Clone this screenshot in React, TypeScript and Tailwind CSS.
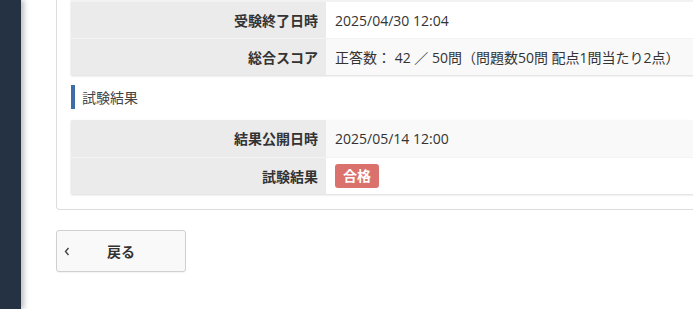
export default function App() {
  const font = { fontFamily: '"Open Sans", "Noto Sans CJK JP", sans-serif' };
  return (
    <div className="flex h-[309px] w-[693px] overflow-hidden bg-white text-[14px] text-[#333]" style={font}>
      {/* Sidebar */}
      <div className="relative z-10 w-[21px] shrink-0 bg-[#253243] shadow-[3px_0_5px_rgba(0,0,0,0.25)]" />

      {/* Main */}
      <div className="flex-1 pl-[35px]">
        {/* Panel */}
        <div className="w-[680px] rounded-b-[4px] border border-t-0 border-[#dddddd] px-[14px] pb-[15px]">
          {/* Exam summary table */}
          <div className="border-t-2 border-[#f2f2f2] shadow-[0_1px_2px_rgba(0,0,0,0.15)]">
            <div className="flex h-[36px]">
              <div className="flex w-[255px] items-center justify-end bg-[#ebebeb] pr-[8px] font-bold">受験終了日時</div>
              <div className="flex flex-1 items-center bg-white pl-[9px]">2025/04/30 12:04</div>
            </div>
            <div className="flex h-[37px] border-t border-[#f3f3f3]">
              <div className="flex w-[255px] items-center justify-end bg-[#ebebeb] pr-[8px] font-bold">総合スコア</div>
              <div className="flex flex-1 items-center bg-[#f9f9f9] pl-[9px]">
                正答数： 42 ／ 50問（問題数50問 配点1問当たり2点）
              </div>
            </div>
          </div>

          {/* Section heading */}
          <div className="mb-[11px] mt-[10px] flex h-[24px] items-center">
            <span className="h-full w-[4px] bg-[#3f6ea6]" />
            <span className="ml-[7px] text-[#444]">試験結果</span>
          </div>

          {/* Result table */}
          <div className="shadow-[0_1px_2px_rgba(0,0,0,0.15)]">
            <div className="flex h-[37px]">
              <div className="flex w-[255px] items-center justify-end bg-[#ebebeb] pr-[8px] font-bold">結果公開日時</div>
              <div className="flex flex-1 items-center bg-[#f9f9f9] pl-[9px]">2025/05/14 12:00</div>
            </div>
            <div className="flex h-[37px] border-t border-[#f3f3f3]">
              <div className="flex w-[255px] items-center justify-end bg-[#ebebeb] pr-[8px] font-bold">試験結果</div>
              <div className="flex flex-1 items-center bg-white pl-[9px]">
                <span className="rounded-[3px] bg-[#db716c] px-[8px] py-[2px] font-bold leading-[20px] text-white">合格</span>
              </div>
            </div>
          </div>
        </div>

        {/* Back button */}
        <button className="mt-[20px] flex h-[42px] w-[130px] items-center rounded-[3px] border border-[#d0d0d0] bg-[#f9f9f9] px-[7px] font-bold text-[#333] shadow-[0_1px_1px_rgba(0,0,0,0.05)]">
          <svg width="6" height="9" viewBox="0 0 6 9" className="shrink-0">
            <path d="M4.5 1 L1.5 4.5 L4.5 8" fill="none" stroke="#444" strokeWidth="1.4" />
          </svg>
          <span className="ml-[37px]">戻る</span>
        </button>
      </div>
    </div>
  );
}
